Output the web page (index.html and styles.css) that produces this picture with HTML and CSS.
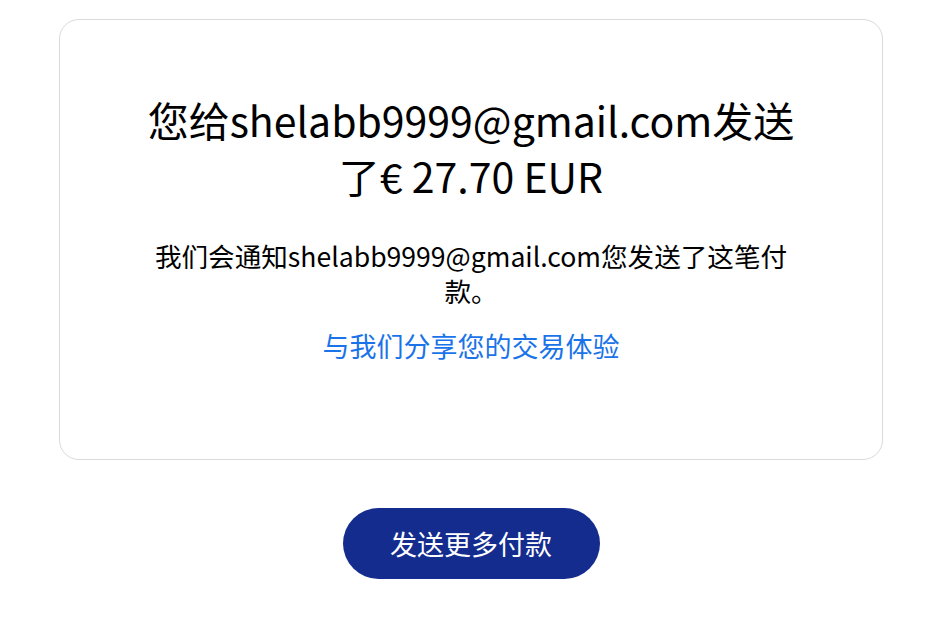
FILE: index.html
```html
<!DOCTYPE html>
<html lang="zh-CN">
<head>
    <meta charset="UTF-8">
    <meta name="viewport" content="width=device-width, initial-scale=1.0">
    <title>付款已发送</title>
    <link rel="stylesheet" href="styles.css">
</head>
<body>
    <div class="page">
        <div class="card">
            <h1 class="title">您给shelabb9999@gmail.com发送了€ 27.70 EUR</h1>
            <p class="note">我们会通知shelabb9999@gmail.com您发送了这笔付款。</p>
            <a class="share-link" href="#">与我们分享您的交易体验</a>
        </div>
        <button type="button" class="send-more">发送更多付款</button>
    </div>
</body>
</html>
```

FILE: styles.css
```css
body {
    margin: 0;
    padding: 0;
    background-color: #ffffff;
    font-family: "Noto Sans CJK SC", "Noto Sans", sans-serif;
    color: #000000;
}

.page {
    display: flex;
    flex-direction: column;
    align-items: center;
    padding: 19px 62px 0 59px;
}

.card {
    box-sizing: border-box;
    width: 824px;
    height: 441px;
    border: 1px solid #dcdad6;
    border-radius: 20px;
    display: flex;
    flex-direction: column;
    align-items: center;
    padding: 71px 80px 0;
    text-align: center;
}

.title {
    max-width: 670px;
    margin: 0;
    font-size: 41px;
    font-weight: 400;
    line-height: 56px;
}

.note {
    max-width: 660px;
    margin: 35px 0 0;
    font-size: 26.6px;
    line-height: 35px;
}

.share-link {
    margin-top: 20px;
    color: #1a73e8;
    font-size: 27px;
    line-height: 36px;
    text-decoration: none;
}

.send-more {
    margin-top: 48px;
    width: 257px;
    height: 71px;
    border: none;
    border-radius: 36px;
    background-color: #142c8e;
    color: #ffffff;
    font-family: "Noto Sans CJK SC", "Noto Sans", sans-serif;
    font-size: 27px;
    cursor: pointer;
}
```
